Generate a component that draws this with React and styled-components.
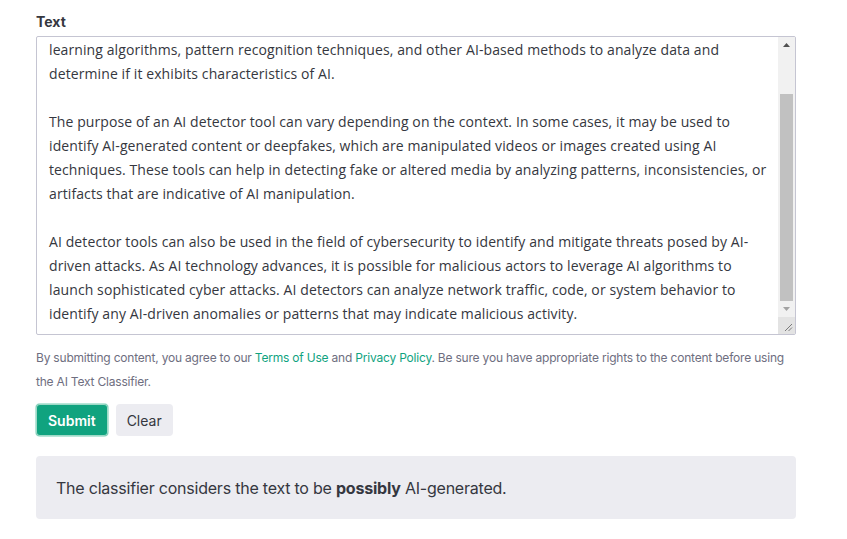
import React from 'react'
import styled, { createGlobalStyle } from 'styled-components'

const GlobalStyle = createGlobalStyle`
  html, body {
    margin: 0;
    padding: 0;
    background: #ffffff;
  }
`

const paragraphs = [
  'learning algorithms, pattern recognition techniques, and other AI-based methods to analyze data and\ndetermine if it exhibits characteristics of AI.',
  'The purpose of an AI detector tool can vary depending on the context. In some cases, it may be used to\nidentify AI-generated content or deepfakes, which are manipulated videos or images created using AI\ntechniques. These tools can help in detecting fake or altered media by analyzing patterns, inconsistencies, or\nartifacts that are indicative of AI manipulation.',
  'AI detector tools can also be used in the field of cybersecurity to identify and mitigate threats posed by AI-\ndriven attacks. As AI technology advances, it is possible for malicious actors to leverage AI algorithms to\nlaunch sophisticated cyber attacks. AI detectors can analyze network traffic, code, or system behavior to\nidentify any AI-driven anomalies or patterns that may indicate malicious activity.',
]

function App() {
  return (
    <>
      <GlobalStyle />
      <Page>
        <Label>Text</Label>
        <TextBox>
          <TextContent>
            {paragraphs.map((p, i) => (
              <Paragraph key={i}>{p}</Paragraph>
            ))}
          </TextContent>
          <Scrollbar>
            <ArrowButton>
              <svg width="7" height="4" viewBox="0 0 7 4"><path d="M0 4 L3.5 0 L7 4 Z" fill="#505050" /></svg>
            </ArrowButton>
            <Track>
              <Thumb />
            </Track>
            <ArrowButton>
              <svg width="7" height="4" viewBox="0 0 7 4"><path d="M0 0 L3.5 4 L7 0 Z" fill="#a3a3a3" /></svg>
            </ArrowButton>
            <Resizer>
              <svg width="9" height="9" viewBox="0 0 9 9">
                <path d="M1 8 L8 1 M4.5 8 L8 4.5" stroke="#7a7a7a" strokeWidth="1" />
              </svg>
            </Resizer>
          </Scrollbar>
        </TextBox>
        <Disclaimer>
          By submitting content, you agree to our <Link>Terms of Use</Link> and <Link>Privacy Policy</Link>. Be sure you have appropriate rights to the content before using the AI Text Classifier.
        </Disclaimer>
        <Buttons>
          <Button $primary>Submit</Button>
          <Button>Clear</Button>
        </Buttons>
        <Result>
          <span>The classifier considers the text to be <strong>possibly</strong> AI-generated.</span>
        </Result>
      </Page>
    </>
  )
}

export default App

const Page = styled.div`
  width: 760px;
  padding: 12px 0 0 36px;
  font-family: Inter, "Liberation Sans", sans-serif;
  color: #353740;
`

const Label = styled.div`
  font-size: 14px;
  font-weight: 700;
  line-height: 20px;
  margin-bottom: 4px;
`

const TextBox = styled.div`
  display: flex;
  height: 297px;
  border: 1px solid #c5c5d2;
  border-radius: 2px;
  overflow: hidden;
`

const TextContent = styled.div`
  flex: 1;
  min-width: 0;
  overflow: hidden;
  padding: 1px 12px 0;
  font-family: "Open Sans", "Noto Sans", sans-serif;
  font-size: 14px;
  line-height: 24px;
  color: #353740;
  letter-spacing: 0.1px;
  white-space: pre;
`

const Paragraph = styled.p`
  margin: 0 0 24px;
`

const Scrollbar = styled.div`
  width: 17px;
  flex-shrink: 0;
  display: flex;
  flex-direction: column;
  background: #f1f1f1;
`

const ArrowButton = styled.div`
  height: 17px;
  display: flex;
  align-items: center;
  justify-content: center;
`

const Track = styled.div`
  flex: 1;
  padding: 41px 2px 0 2px;
  display: flex;
  flex-direction: column;
`

const Thumb = styled.div`
  height: 207px;
  background: #c1c1c1;
`

const Resizer = styled.div`
  height: 16px;
  background: #e3e3e3;
  display: flex;
  align-items: flex-end;
  justify-content: flex-end;
  padding: 0 2px 2px 0;
`

const Disclaimer = styled.p`
  margin: 11px 0 0;
  font-size: 12px;
  line-height: 24px;
  color: #6e6e80;
  letter-spacing: -0.2px;
`

const Link = styled.a`
  color: #10a37f;
  text-decoration: none;
`

const Buttons = styled.div`
  display: flex;
  gap: 8px;
  margin-top: 10px;
`

const Button = styled.button`
  font-family: Inter, "Liberation Sans", sans-serif;
  font-size: 14px;
  height: 32px;
  padding: 0 ${p => (p.$primary ? '12px' : '11px')};
  border: none;
  border-radius: 4px;
  background: ${p => (p.$primary ? '#10a37f' : '#ececf1')};
  color: ${p => (p.$primary ? '#ffffff' : '#353740')};
  font-weight: ${p => (p.$primary ? 600 : 400)};
  letter-spacing: 0;
  box-shadow: ${p => (p.$primary ? 'inset 0 0 0 1px #9ed9c7, 0 0 0 1px #b7e6d8' : 'none')};
  cursor: pointer;
`

const Result = styled.div`
  margin-top: 20px;
  height: 63px;
  box-sizing: border-box;
  padding: 0 20px;
  display: flex;
  align-items: center;
  background: #ececf1;
  border-radius: 4px;
  font-size: 16px;
  letter-spacing: -0.22px;
  color: #353740;

  strong {
    font-weight: 700;
  }
`
